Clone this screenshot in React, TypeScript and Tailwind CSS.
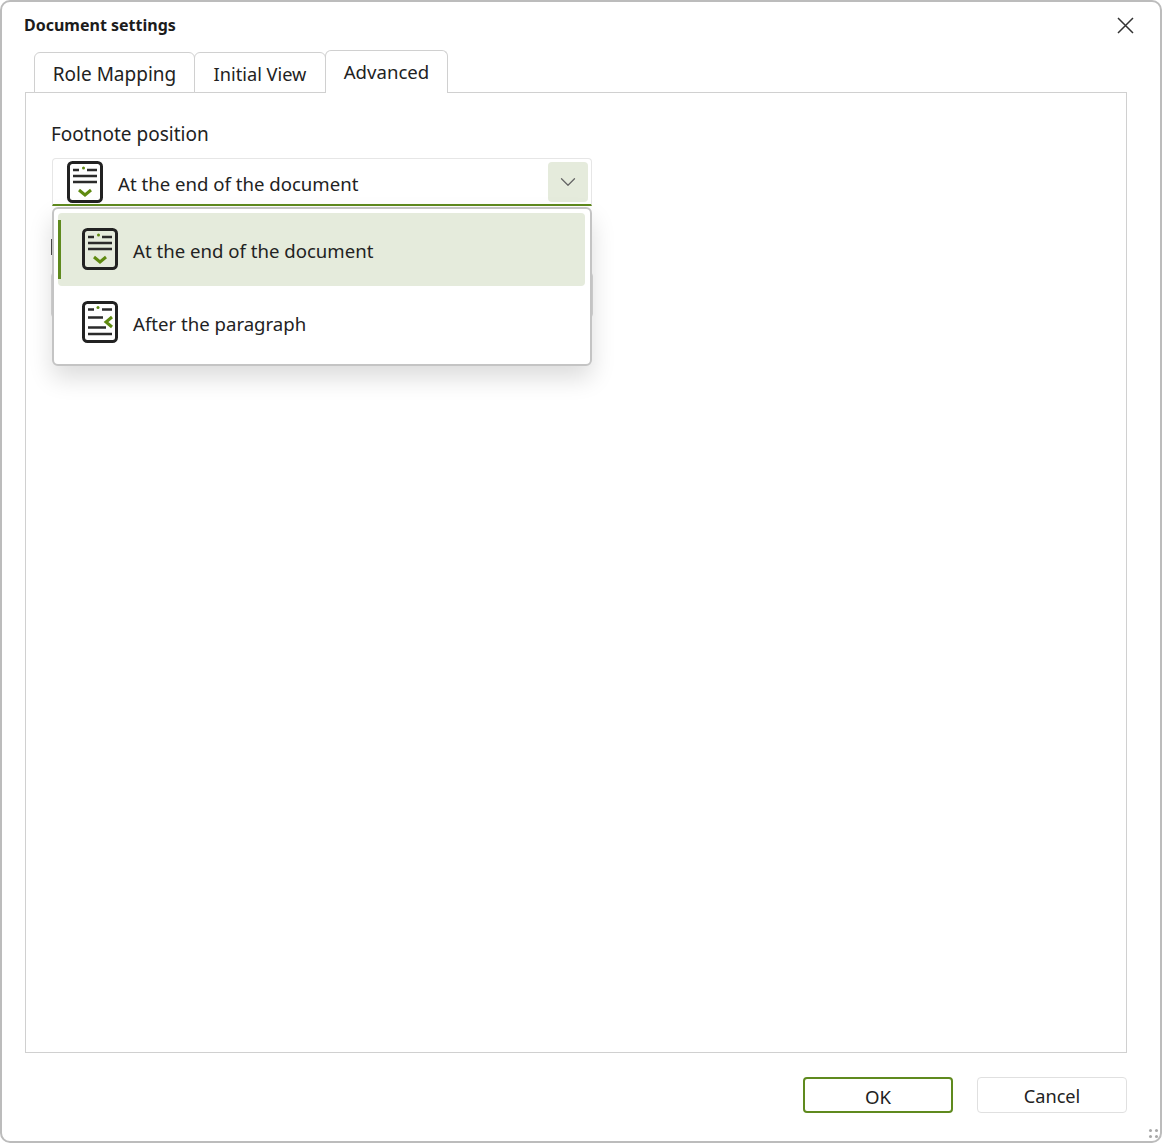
import { ChevronDown } from "lucide-react";

function EndOfDocIcon() {
  return (
    <svg width="36" height="42" viewBox="0 0 36 42" fill="none" className="shrink-0">
      <rect x="1.5" y="1.5" width="33" height="39" rx="4" stroke="#222222" strokeWidth="3" />
      <path d="M6 9h6M20 9h10M6 15h24M6 21h24" stroke="#2b2b2b" strokeWidth="2.7" />
      <circle cx="16.5" cy="7" r="1.5" fill="#5f8a10" />
      <path d="M12 29l6 5 6-5" stroke="#5f8a10" strokeWidth="3" />
    </svg>
  );
}

function AfterParagraphIcon() {
  return (
    <svg width="36" height="42" viewBox="0 0 36 42" fill="none" className="shrink-0">
      <rect x="1.5" y="1.5" width="33" height="39" rx="4" stroke="#222222" strokeWidth="3" />
      <path d="M6 8.5h6M20 8.5h10M6 16.5h15M6 26.5h18M6 33h24" stroke="#2b2b2b" strokeWidth="2.7" />
      <circle cx="16" cy="6.5" r="1.5" fill="#5f8a10" />
      <path d="M30 16l-6 5 6 5" stroke="#5f8a10" strokeWidth="3" />
    </svg>
  );
}

export default function App() {
  return (
    <div className="relative w-[1162px] h-[1143px] flex flex-col overflow-hidden rounded-[10px] border-2 border-[#bcbcbc] bg-white font-['Noto_Sans',sans-serif] text-[#222222] text-[18.6px]">
      {/* Title bar */}
      <div className="h-[48px] shrink-0 flex items-center justify-between pl-[22px] pr-[26px] pb-[2px]">
        <span className="text-[16px] font-bold text-[#1c1c1c]">Document settings</span>
        <svg width="17" height="17" viewBox="0 0 17 17" fill="none" stroke="#333333" strokeWidth="1.5">
          <path d="M1 1l15 15M16 1L1 16" />
        </svg>
      </div>

      {/* Tabs */}
      <div className="flex items-end pl-[32px] relative z-10 -mb-px">
        <div className="w-[161px] h-[41px] flex items-center justify-center rounded-t-[6px] border border-[#d0d0d0] bg-white pt-[4px] text-[19px]">
          Role Mapping
        </div>
        <div className="w-[132px] h-[41px] -ml-px flex items-center justify-center rounded-t-[6px] border border-[#d0d0d0] bg-white pt-[4px] text-[18.2px]">
          Initial View
        </div>
        <div className="w-[123px] h-[43px] -ml-px flex items-center justify-center rounded-t-[6px] border border-b-0 border-[#d0d0d0] bg-white">
          Advanced
        </div>
      </div>

      {/* Panel */}
      <div className="ml-[23px] mr-[33px] h-[961px] shrink-0 border border-[#d0d0d0] px-[26px] pt-[28px]">
        <div className="h-[37px] leading-[26px] -ml-px text-[19px]">Footnote position</div>
        <div className="relative w-[540px]">
          <div className="h-[48px] flex items-center justify-between rounded-t-[4px] border border-b-0 border-[#e6e6e6] border-b-[2px] border-b-[#5f8a1e] pl-[14px] pr-[3px]">
            <div className="flex items-center gap-[15px]">
              <EndOfDocIcon />
              <span className="pt-[4px]">At the end of the document</span>
            </div>
            <div className="w-[40px] h-[40px] flex items-center justify-center rounded-[4px] bg-[#e5ebdc]">
              <ChevronDown className="w-[26px] h-[26px] text-[#666666]" strokeWidth={1.2} />
            </div>
          </div>

          {/* Open list */}
          <div className="absolute z-20 top-[49px] left-0 w-[540px] h-[159px] rounded-[6px] border-[2px] border-[#c4c4c4] bg-white pl-[4px] pr-[5px] pt-[4px] shadow-[0_12px_24px_rgba(0,0,0,0.14)]">
            <div className="relative h-[73px] flex items-center gap-[15px] rounded-[4px] bg-[#e5ebdc] pl-[24px] pb-[2px]">
              <div className="absolute left-0 top-[7px] bottom-[7px] w-[3px] bg-[#5f8a1e]" />
              <EndOfDocIcon />
              <span className="pt-[4px]">At the end of the document</span>
            </div>
            <div className="h-[73px] flex items-center gap-[15px] pl-[24px] pb-[2px]">
              <AfterParagraphIcon />
              <span className="pt-[4px]">After the paragraph</span>
            </div>
          </div>

          {/* Field behind the open list */}
          <div className="mt-[33px] -ml-px w-[2px] h-[16px] bg-[#4a4a4a]" />
          <div className="mt-[17px] -mx-px h-[46px] rounded-[4px] border border-[#d8d8d8]" />
        </div>
      </div>

      {/* Footer */}
      <div className="flex justify-end gap-[24px] pr-[33px] pt-[24px]">
        <div className="w-[150px] h-[36px] flex items-center justify-center rounded-[4px] border-2 border-[#5f8a1e] pt-[3px]">OK</div>
        <div className="w-[150px] h-[36px] flex items-center justify-center rounded-[4px] border border-[#e0e0e0] pt-[3px] text-[18.2px]">Cancel</div>
      </div>

      {/* Resize grip */}
      <div className="absolute right-[2px] bottom-[3px] grid grid-cols-2 gap-[3px]">
        <span className="w-[3px] h-[3px] rounded-full bg-[#a8a8a8]" />
        <span className="w-[3px] h-[3px] rounded-full bg-[#a8a8a8]" />
        <span className="w-[3px] h-[3px] rounded-full bg-[#a8a8a8]" />
        <span className="w-[3px] h-[3px] rounded-full bg-[#a8a8a8]" />
      </div>
    </div>
  );
}
